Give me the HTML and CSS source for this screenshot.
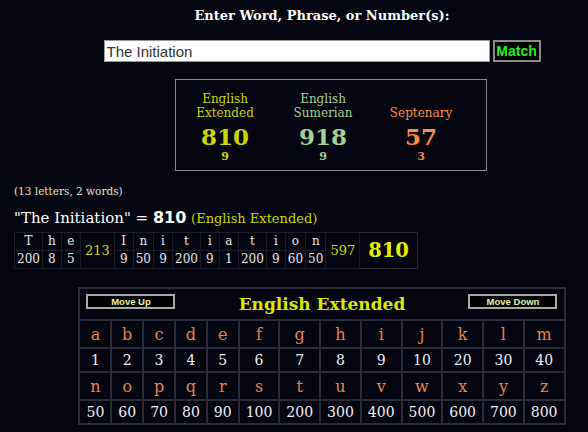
FILE: index.html
```html
<!DOCTYPE html>
<html lang="en">
<head>
    <meta charset="UTF-8">
    <meta name="viewport" content="width=device-width, initial-scale=1.0">
    <title>Gematria Calculator</title>
    <link rel="stylesheet" href="styles.css">
</head>
<body>
    <section class="top">
        <h1 class="prompt">Enter Word, Phrase, or Number(s):</h1>
        <div class="entry">
            <input class="phrase" type="text" value="The Initiation">
            <button class="match-btn">Match</button>
        </div>

        <div class="summary">
            <div class="cipher extended">
                <div class="cipher-name">English<br>Extended</div>
                <div class="cipher-total">810</div>
                <div class="cipher-reduced">9</div>
            </div>
            <div class="cipher sumerian">
                <div class="cipher-name">English<br>Sumerian</div>
                <div class="cipher-total">918</div>
                <div class="cipher-reduced">9</div>
            </div>
            <div class="cipher septenary">
                <div class="cipher-name">Septenary</div>
                <div class="cipher-total">57</div>
                <div class="cipher-reduced">3</div>
            </div>
        </div>
    </section>

    <section class="details">
        <p class="count">(13 letters, 2 words)</p>
        <p class="equation">"The Initiation" = <b>810</b> <span class="eq-cipher">(English Extended)</span></p>

        <table class="breakdown">
            <tr>
                <td>T</td><td>h</td><td>e</td>
                <td class="word-sum" rowspan="2">213</td>
                <td>I</td><td>n</td><td>i</td><td>t</td><td>i</td><td>a</td><td>t</td><td>i</td><td>o</td><td>n</td>
                <td class="word-sum" rowspan="2">597</td>
                <td class="grand-sum" rowspan="2">810</td>
            </tr>
            <tr>
                <td>200</td><td>8</td><td>5</td>
                <td>9</td><td>50</td><td>9</td><td>200</td><td>9</td><td>1</td><td>200</td><td>9</td><td>60</td><td>50</td>
            </tr>
        </table>
    </section>

    <section class="chart-wrap">
        <table class="chart">
            <tr>
                <th colspan="13">
                    <div class="chart-head">
                        <button class="move-btn">Move Up</button>
                        <span class="chart-title">English Extended</span>
                        <button class="move-btn">Move Down</button>
                    </div>
                </th>
            </tr>
            <tr class="letters">
                <td>a</td><td>b</td><td>c</td><td>d</td><td>e</td><td>f</td><td>g</td><td>h</td><td>i</td><td>j</td><td>k</td><td>l</td><td>m</td>
            </tr>
            <tr class="values">
                <td>1</td><td>2</td><td>3</td><td>4</td><td>5</td><td>6</td><td>7</td><td>8</td><td>9</td><td>10</td><td>20</td><td>30</td><td>40</td>
            </tr>
            <tr class="letters">
                <td>n</td><td>o</td><td>p</td><td>q</td><td>r</td><td>s</td><td>t</td><td>u</td><td>v</td><td>w</td><td>x</td><td>y</td><td>z</td>
            </tr>
            <tr class="values">
                <td>50</td><td>60</td><td>70</td><td>80</td><td>90</td><td>100</td><td>200</td><td>300</td><td>400</td><td>500</td><td>600</td><td>700</td><td>800</td>
            </tr>
        </table>
    </section>
</body>
</html>
```

FILE: styles.css
```css
/* Base */
body {
    margin: 0;
    background: #050510;
    color: white;
    font-family: 'DejaVu Serif', serif;
}

/* Top input area */
.top {
    display: flex;
    flex-direction: column;
    align-items: center;
    padding-left: 56px;
}

.prompt {
    margin: 8px 0 0;
    font-size: 13px;
    line-height: 16px;
    font-weight: bold;
}

.entry {
    display: flex;
    gap: 3px;
    margin-top: 16px;
}

.phrase {
    box-sizing: border-box;
    width: 386px;
    height: 22px;
    margin: 0;
    padding: 0 2px;
    border: 1px solid #999;
    background: white;
    color: #333;
    font-family: 'Liberation Sans', Arial, sans-serif;
    font-size: 15px;
}

.match-btn {
    box-sizing: border-box;
    width: 48px;
    height: 22px;
    padding: 0;
    background: black;
    border: 2px solid #8a8a8a;
    color: #22ee22;
    font-family: 'Liberation Sans', Arial, sans-serif;
    font-size: 14px;
    font-weight: bold;
}

/* Summary box */
.summary {
    box-sizing: border-box;
    width: 312px;
    height: 92px;
    margin: 17px 0 0 18px;
    padding: 12px 16px 0 0;
    border: 1px solid #8a8a8a;
    display: flex;
    justify-content: center;
}

.cipher {
    width: 105px;
    text-align: center;
}

.cipher-name {
    height: 28px;
    font-size: 12px;
    line-height: 14px;
    display: flex;
    align-items: flex-end;
    justify-content: center;
}

.cipher-total {
    margin-top: 4px;
    font-size: 23px;
    line-height: 26px;
    font-weight: bold;
}

.cipher-reduced {
    font-size: 11px;
    line-height: 14px;
    font-weight: bold;
}

.extended { color: #c9d600; }
.sumerian { color: #a4cf96; }
.septenary { color: #ff8a48; }

/* Details */
.details {
    padding-left: 14px;
}

.count {
    margin: 13px 0 0;
    font-size: 10.5px;
    line-height: 14px;
    color: #e6e0cc;
}

.equation {
    margin: 10px 0 0;
    font-size: 15px;
    line-height: 20px;
}

.equation b {
    font-family: 'DejaVu Sans', sans-serif;
    font-size: 16px;
}

.eq-cipher {
    color: #c9d600;
    font-size: 13px;
}

.breakdown {
    margin-top: 3px;
    border-collapse: collapse;
    border: 1px solid #1c1c28;
}

.breakdown td {
    min-width: 14px;
    padding: 0 2px;
    height: 17px;
    border: 1px solid #1c1c28;
    text-align: center;
    font-size: 12px;
    line-height: 17px;
    color: #e8e8e8;
}

.breakdown .word-sum {
    padding: 0 4px;
    color: #c9d600;
    font-size: 13px;
}

.breakdown .grand-sum {
    padding: 0 8px;
    color: #e6f000;
    font-size: 19.5px;
    font-weight: bold;
    border: 1px solid #2a2a36;
}

/* Cipher chart */
.chart-wrap {
    display: flex;
    justify-content: center;
    padding-left: 56px;
    margin-top: 18px;
}

.chart {
    border-collapse: collapse;
    border: 2px solid #2c2c36;
}

.chart th {
    height: 30px;
    padding: 0 6px;
    border: 2px solid #2c2c36;
}

.chart-head {
    display: flex;
    justify-content: space-between;
    align-items: center;
}

.move-btn {
    box-sizing: border-box;
    width: 89px;
    height: 15px;
    padding: 0;
    background: black;
    border: 2px solid #a8a8a8;
    color: #e8f0a0;
    font-family: 'Liberation Sans', Arial, sans-serif;
    font-size: 9.5px;
    font-weight: bold;
    margin-top: -6px;
}

.chart-title {
    color: #d8e800;
    font-size: 17px;
    font-weight: bold;
}

.chart td {
    padding: 0 6px;
    border: 2px solid #2c2c36;
    text-align: center;
}

.letters td {
    height: 26px;
    color: #e8834a;
    font-size: 16px;
}

.values td {
    height: 22px;
    color: #f0f0f0;
    font-size: 14px;
}
```
